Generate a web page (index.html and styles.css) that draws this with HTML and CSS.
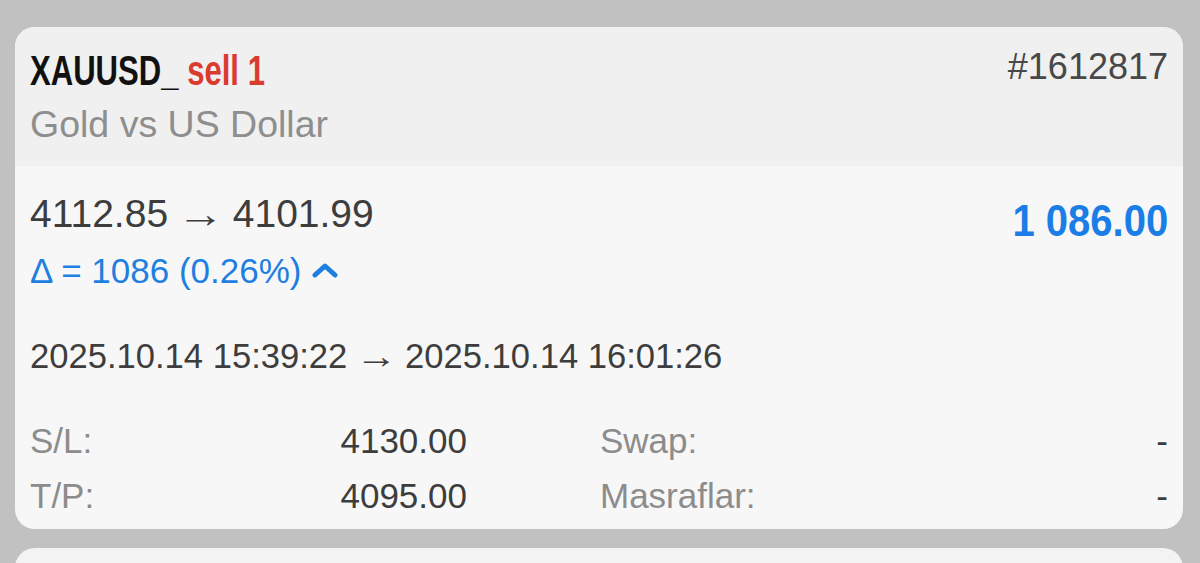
FILE: index.html
```html
<!DOCTYPE html>
<html lang="tr">
<head>
  <meta charset="UTF-8">
  <title>Geçmiş</title>
  <meta name="viewport" content="width=device-width, initial-scale=1.0">
  <link rel="stylesheet" href="styles.css">
</head>
<body>
  <div class="deal-card">
    <div class="deal-head">
      <div class="head-top">
        <span class="symbol">XAUUSD_ <span class="side-sell">sell 1</span></span>
        <span class="ticket">#1612817</span>
      </div>
      <div class="symbol-desc">Gold vs US Dollar</div>
    </div>
    <div class="deal-body">
      <div class="price-row">
        <div class="prices">
          <div class="price-line">4112.85 <span class="arrow">&rarr;</span> 4101.99</div>
          <div class="delta-line">
            &Delta; = 1086 (0.26%)
            <svg class="chevron" width="26" height="16" viewBox="0 0 26 16" aria-hidden="true">
              <polyline points="3,13 13,4 23,13" fill="none" stroke="currentColor" stroke-width="5" stroke-linecap="round" stroke-linejoin="round"/>
            </svg>
          </div>
        </div>
        <span class="profit">1 086.00</span>
      </div>
      <div class="time-line">2025.10.14 15:39:22 <span class="arrow">&rarr;</span> 2025.10.14 16:01:26</div>
      <div class="stats">
        <div class="stat"><span class="stat-label">S/L:</span><span class="stat-value">4130.00</span></div>
        <div class="stat"><span class="stat-label">Swap:</span><span class="stat-value">-</span></div>
        <div class="stat"><span class="stat-label">T/P:</span><span class="stat-value">4095.00</span></div>
        <div class="stat"><span class="stat-label">Masraflar:</span><span class="stat-value">-</span></div>
      </div>
    </div>
  </div>
  <div class="deal-card next-card"></div>
</body>
</html>
```

FILE: styles.css
```css
body {
  margin: 0;
  padding: 27px 17px 0 15px;
  background: #c1c1c1;
  font-family: 'Liberation Sans', Arial, sans-serif;
  color: #3d3d3d;
  height: 563px;
  box-sizing: border-box;
  overflow: hidden;
}
.deal-card {
  border-radius: 20px;
  overflow: hidden;
  background: #f7f7f7;
}
.deal-head {
  background: #f0f0f0;
  padding: 20px 15px 13px 15px;
}
.head-top {
  display: flex;
  justify-content: space-between;
  align-items: flex-start;
}
.symbol {
  display: inline-block;
  font-weight: bold;
  font-size: 42px;
  line-height: 48px;
  color: #111;
  transform: scaleX(0.74);
  transform-origin: left center;
  white-space: nowrap;
}
.side-sell {
  color: #db3a2f;
}
.ticket {
  font-size: 36px;
  line-height: 40px;
  color: #484848;
}
.symbol-desc {
  font-size: 37.5px;
  line-height: 58px;
  color: #8e8e8e;
}
.deal-body {
  padding: 24px 15px 6px 15px;
}
.price-row {
  display: flex;
  justify-content: space-between;
  align-items: flex-start;
}
.price-line {
  font-size: 39px;
  line-height: 48px;
  color: #3d3d3d;
}
.arrow {
  display: inline-block;
  margin: 0 2px;
  transform: scaleX(1.22);
}
.delta-line {
  margin-top: 11px;
  font-size: 35px;
  line-height: 44px;
  color: #1f7fe0;
  display: flex;
  align-items: center;
  gap: 11px;
}
.chevron {
  margin-top: -2px;
}
.profit {
  margin-top: 7px;
  font-size: 44px;
  line-height: 48px;
  font-weight: bold;
  color: #1a7ee6;
  transform: scaleX(0.91);
  transform-origin: right center;
  white-space: nowrap;
}
.time-line {
  margin-top: 41px;
  font-size: 34.6px;
  line-height: 44px;
  color: #3d3d3d;
}
.stats {
  margin-top: 35px;
  display: grid;
  grid-template-columns: 437px 1fr;
  column-gap: 133px;
}
.stat {
  display: flex;
  justify-content: space-between;
  font-size: 35px;
  line-height: 55px;
}
.stat-label {
  color: #8c8c8c;
}
.stat-value {
  color: #3d3d3d;
}
.next-card {
  margin-top: 19px;
  height: 40px;
  background: #f3f3f3;
}
```
